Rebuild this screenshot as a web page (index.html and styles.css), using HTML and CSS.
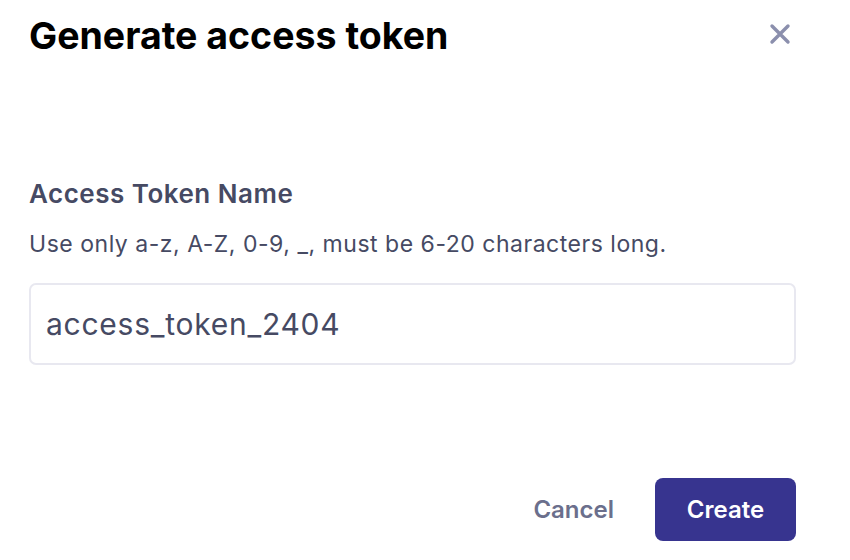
FILE: index.html
```html
<!DOCTYPE html>
<html>
<head>
<meta charset="utf-8">
<link rel="stylesheet" href="styles.css">
</head>
<body>
<div class="dialog">
  <header class="head">
    <h1 class="title">Generate access token</h1>
    <button class="close" aria-label="Close">
      <svg width="24" height="24" viewBox="0 0 24 24"><path d="M4 4L20 20M20 4L4 20" stroke="#8b8fad" stroke-width="3.4" stroke-linecap="round"/></svg>
    </button>
  </header>
  <section class="body">
    <label class="label">Access Token Name</label>
    <p class="hint">Use only a-z, A-Z, 0-9, _, must be 6-20 characters long.</p>
    <div class="input">access_token_2404</div>
  </section>
  <footer class="foot">
    <button class="cancel">Cancel</button>
    <button class="create">Create</button>
  </footer>
</div>
</body>
</html>
```
FILE: styles.css
```css
* { box-sizing: border-box; }
html, body { margin: 0; background: #fff; }
body { font-family: Inter, "Noto Sans", sans-serif; }
.dialog { width: 850px; height: 560px; padding: 14px 54px 19px 29px; display: flex; flex-direction: column; }
.head { display: flex; justify-content: space-between; align-items: flex-start; }
.title { margin: 0; font-size: 37.5px; line-height: 44px; font-weight: 700; color: #000; }
.close { background: none; border: 0; padding: 0; margin: 8px 4px 0 0; width: 24px; height: 24px; display: flex; }
.body { padding-top: 120px; display: flex; flex-direction: column; }
.label { font-size: 26px; font-weight: 600; color: #464a63; line-height: 32px; letter-spacing: 0.5px; }
.hint { margin: 20px 0 0; font-size: 23px; color: #464a63; line-height: 28px; letter-spacing: 0.52px; }
.input { margin-top: 25px; height: 82px; border: 2px solid #e8e8f0; border-radius: 7px; padding: 0 15px; display: flex; align-items: center; font-size: 30px; letter-spacing: 0.75px; color: #464a63; }
.foot { margin-top: auto; display: flex; justify-content: flex-end; align-items: center; gap: 41px; }
.cancel { background: none; border: 0; font-family: inherit; font-size: 24px; font-weight: 600; color: #6b6f8c; padding: 0; }
.create { background: #37348f; border: 0; border-radius: 8px; font-family: inherit; font-size: 24px; font-weight: 600; color: #fff; width: 141px; height: 63px; }
```
